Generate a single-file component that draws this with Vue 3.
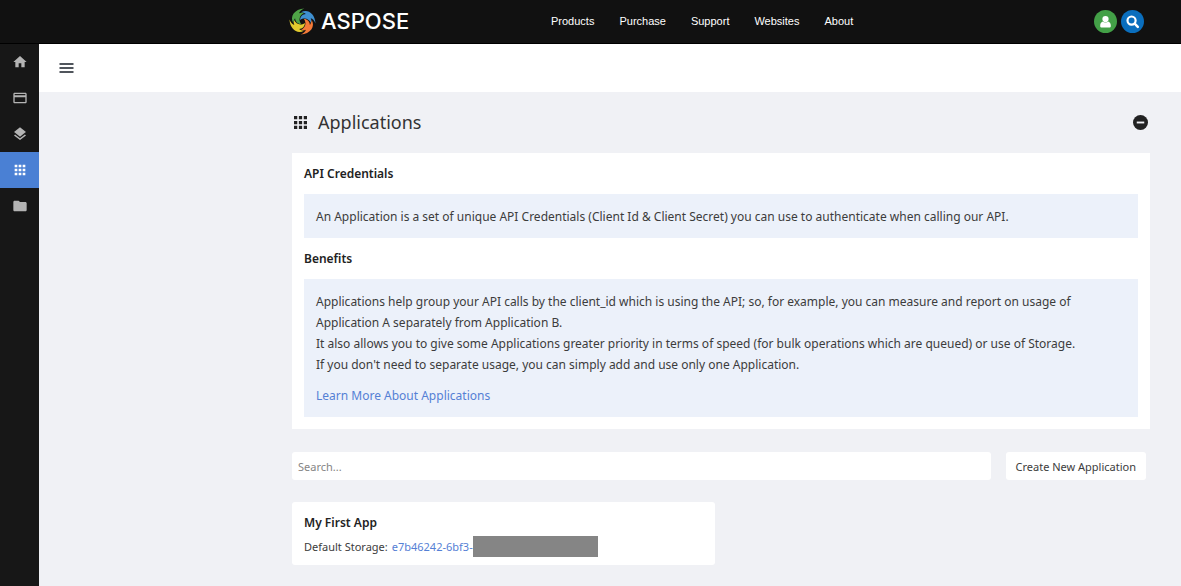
<script setup>
import { ref } from 'vue'

const links = ['Products', 'Purchase', 'Support', 'Websites', 'About']
const sidebar = [
  { label: 'Home', path: 'M10 20v-6h4v6h5v-8h3L12 3 2 12h3v8z' },
  { label: 'Billing', path: 'M20 4H4c-1.1 0-2 .9-2 2v12c0 1.1.9 2 2 2h16c1.1 0 2-.9 2-2V6c0-1.1-.9-2-2-2zm0 14H4v-7h16v7zm0-10H4V6h16v2z' },
  { label: 'Layers', path: 'M12 18.54l-7.37-5.73L3 14.07l9 7 9-7-1.63-1.27-7.38 5.74zM12 16l7.36-5.73L21 9l-9-7-9 7 1.63 1.27L12 16z' },
  { label: 'Applications', path: 'M4 8h4V4H4v4zm6 12h4v-4h-4v4zm-6 0h4v-4H4v4zm0-6h4v-4H4v4zm6 0h4v-4h-4v4zm6-10v4h4V4h-4zm-6 4h4V4h-4v4zm6 6h4v-4h-4v4zm0 6h4v-4h-4v4z', active: true },
  { label: 'Files', path: 'M10 4H4c-1.1 0-2 .9-2 2v12c0 1.1.9 2 2 2h16c1.1 0 2-.9 2-2V8c0-1.1-.9-2-2-2h-8l-2-2z' }
]
const blades = [
  { color: '#3f8fd0', turn: 0 },
  { color: '#f47a38', turn: 90 },
  { color: '#e2cb2e', turn: 180 },
  { color: '#4fa447', turn: 270 }
]
const search = ref('')
const open = ref(true)
</script>

<template>
  <div class="page">
    <header class="top">
      <a class="logo" href="#" aria-label="Aspose">
        <svg class="swirl" viewBox="0 0 28 28" aria-hidden="true">
          <path v-for="b in blades" :key="b.turn" :transform="`rotate(${b.turn} 14 14)`" :fill="b.color" d="M12.500 4.500C19 .5 27 5.500 27.500 16C26 12.500 24.500 11 22.500 10.500C23.200 12 23.300 13.500 22.800 15.500C20.500 11 16 9.500 11.500 12.500C11.500 9 14 6.500 17.500 6.300C16 5.300 14.500 4.700 12.500 4.500Z" />
        </svg>
        <span class="brand">ASPOSE</span>
      </a>
      <nav class="links">
        <a v-for="l in links" :key="l" href="#">{{ l }}</a>
      </nav>
      <div class="tools">
        <button class="round user" type="button" aria-label="Account">
          <svg viewBox="0 0 24 24"><circle cx="12" cy="8" r="5" /><path d="M7.500 12C5 13 3.500 15.500 3.500 19c0 1.500 1 2.500 2.500 2.500h12c1.500 0 2.500-1 2.500-2.500 0-3.500-1.500-6-4-7-2.500 2.300-6.500 2.300-9 0z" /></svg>
        </button>
        <button class="round find" type="button" aria-label="Search site">
          <svg viewBox="0 0 24 24"><circle cx="10.500" cy="10.500" r="6.500" fill="none" stroke="currentColor" stroke-width="3.500" /><path d="M15.500 15.500l5 5" stroke="currentColor" stroke-width="4" stroke-linecap="round" /></svg>
        </button>
      </div>
    </header>

    <div class="body">
      <aside class="side">
        <a v-for="s in sidebar" :key="s.label" href="#" :class="{ active: s.active }" :aria-label="s.label">
          <svg viewBox="0 0 24 24"><path :d="s.path" /></svg>
        </a>
      </aside>

      <div class="main">
        <div class="bar">
          <button class="menu" type="button" aria-label="Menu">
            <svg viewBox="0 0 14 10"><path d="M0 0h14v2H0zM0 4h14v2H0zM0 8h14v2H0z" /></svg>
          </button>
        </div>

        <main class="content">
          <div class="title">
            <svg class="grid-icon" viewBox="4 4 16 16" aria-hidden="true"><path :d="sidebar[3].path" /></svg>
            <h1>Applications</h1>
            <button class="fold" type="button" aria-label="Toggle details" @click="open = !open">
              <svg viewBox="0 0 16 16"><circle cx="8" cy="8" r="8" /><path d="M4 7h8v2H4z" fill="#f0f1f5" /></svg>
            </button>
          </div>

          <section v-if="open" class="card info">
            <h2>API Credentials</h2>
            <div class="note">
              <p>An Application is a set of unique API Credentials (Client Id &amp; Client Secret) you can use to authenticate when calling our API.</p>
            </div>
            <h2>Benefits</h2>
            <div class="note">
              <p>Applications help group your API calls by the client_id which is using the API; so, for example, you can measure and report on usage of Application A separately from Application B.<br>It also allows you to give some Applications greater priority in terms of speed (for bulk operations which are queued) or use of Storage.<br>If you don't need to separate usage, you can simply add and use only one Application.</p>
              <p class="more"><a href="#">Learn More About Applications</a></p>
            </div>
          </section>

          <div class="search-row">
            <input v-model="search" type="text" placeholder="Search..." aria-label="Search applications">
            <button type="button">Create New Application</button>
          </div>

          <article class="card app">
            <h2>My First App</h2>
            <p class="storage">Default Storage: <a href="#">e7b46242-6bf3-</a><span class="mask"></span></p>
          </article>
        </main>
      </div>
    </div>
  </div>
</template>

<style>
body {
  background: #f0f1f5;
}
</style>

<style scoped>
* {
  box-sizing: border-box;
}
.page {
  min-height: 100vh;
  display: flex;
  flex-direction: column;
  font: 12px/21px "Noto Sans", sans-serif;
  color: #3c3c3c;
}
h1, h2, p {
  margin: 0;
}
a {
  color: #5580d5;
  text-decoration: none;
}
button {
  border: 0;
  padding: 0;
  font: inherit;
  color: inherit;
  cursor: pointer;
}
svg {
  display: block;
  fill: currentColor;
}
.top {
  height: 44px;
  padding: 0 37px 1px 289px;
  display: flex;
  align-items: center;
  background: #111;
  border-bottom: 1px solid #000;
}
.logo {
  width: 262px;
  display: flex;
  align-items: center;
  gap: 5px;
  color: #fff;
}
.swirl {
  width: 27px;
  height: 27px;
}
.brand {
  font: 500 22px/28px Inter, sans-serif;
}
.links {
  display: flex;
  gap: 25px;
  font: 11px/16px "Liberation Sans", Arial, sans-serif;
}
.links a {
  color: #fff;
}
.tools {
  margin-left: auto;
  display: flex;
  gap: 4px;
}
.round {
  width: 23px;
  height: 23px;
  border-radius: 50%;
  display: grid;
  place-items: center;
  color: #fff;
}
.round svg {
  width: 15px;
  height: 15px;
}
.user {
  background: #43a047;
}
.find {
  background: #0a6ebd;
}
.body {
  flex: 1;
  display: flex;
}
.side {
  width: 39px;
  flex: none;
  background: #171717;
}
.side a {
  height: 36px;
  display: grid;
  place-items: center;
  color: #b4b4b4;
}
.side a.active {
  background: #4a80d4;
  color: #fff;
}
.side svg {
  width: 16px;
  height: 16px;
}
.main {
  flex: 1;
  min-width: 0;
}
.bar {
  height: 48px;
  padding: 0 20px;
  display: flex;
  align-items: center;
  background: #fff;
}
.menu {
  background: none;
  color: #50555c;
}
.menu svg {
  width: 15px;
  height: 10px;
}
.content {
  padding: 16px 31px 21px 253px;
}
.title {
  display: flex;
  align-items: center;
  padding: 0 2px;
  color: #222;
}
.grid-icon {
  width: 13px;
  height: 13px;
}
.title h1 {
  margin-left: 11px;
  font-size: 18px;
  font-weight: 400;
  line-height: 29px;
  color: #333;
}
.fold {
  margin-left: auto;
  background: none;
}
.fold svg {
  width: 15px;
  height: 15px;
}
.card {
  background: #fff;
  padding: 0 12px 12px;
}
.info {
  margin-top: 16px;
}
h2 {
  font-size: 12px;
  font-weight: 600;
  line-height: 21px;
  padding: 10px 0;
  color: #222;
}
.note {
  padding: 12px 12px 11px;
  background: #ecf1fa;
}
.more {
  margin-top: 10px;
}
.search-row {
  margin-top: 23px;
  padding-right: 4px;
  display: flex;
  gap: 15px;
}
.search-row input {
  flex: 1;
  min-width: 0;
  height: 28px;
  padding: 0 6px;
  border: 0;
  border-radius: 3px;
  background: #fff;
  font: inherit;
  font-size: 11px;
  color: #444;
}
.search-row input::placeholder {
  color: #858585;
}
.search-row button {
  padding: 0 10px;
  border-radius: 3px;
  background: #fff;
  font-size: 11px;
}
.app {
  width: 423px;
  max-width: 100%;
  margin-top: 22px;
  padding-bottom: 8px;
  border-radius: 3px;
}
.app h2 {
  padding-bottom: 3px;
}
.storage {
  display: flex;
  align-items: center;
  font-size: 11px;
}
.storage a {
  margin-left: 4px;
}
.mask {
  width: 125px;
  height: 21px;
  background: #858585;
}
</style>
